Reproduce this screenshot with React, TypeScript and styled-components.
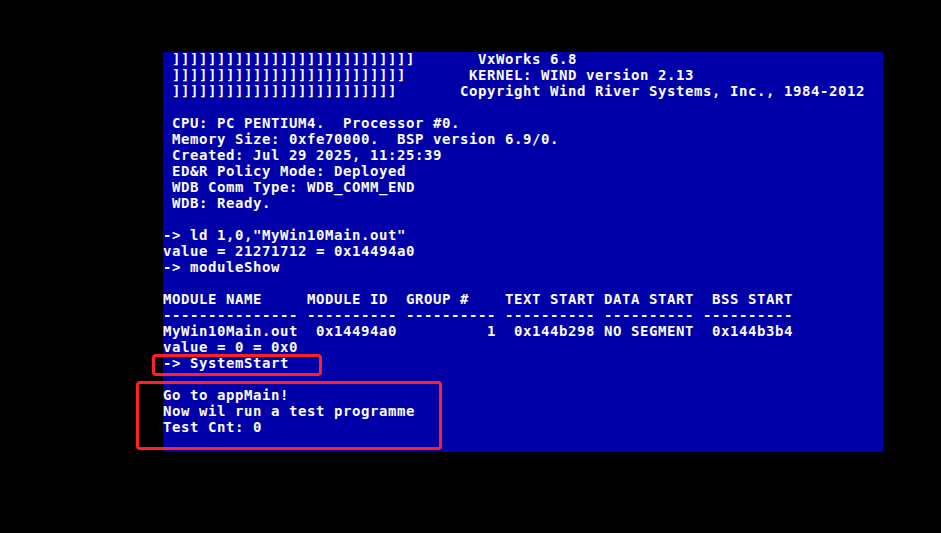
import styled, { createGlobalStyle } from "styled-components";

// 전역 스타일
const GlobalStyle = createGlobalStyle`
  html, body {
    margin: 0;
    padding: 0;
    background: #000;
  }
`;

// 검은 바탕 페이지
const Page = styled.div`
  position: relative;
  width: 941px;
  height: 533px;
  background: #000;
  padding: 52px 0 0 163px;
  box-sizing: border-box;
  overflow: hidden;
`;

// VGA 텍스트 화면 (80x25)
const Screen = styled.div`
  width: 720px;
  height: 400px;
  background: #0000a8;
  overflow: hidden;
  display: flex;
  flex-direction: column;
`;

const Line = styled.div<{ $first?: boolean }>`
  height: 16px;
  line-height: 16px;
  white-space: pre;
  color: #fcfcfc;
  font-family: "DejaVu Sans Mono", "Liberation Mono", monospace;
  font-weight: bold;
  font-size: 14px;
  letter-spacing: 0.57px;
  margin-top: ${(p) => (p.$first ? "-1px" : "0")};
`;

// 빨간 강조 박스
const Marker = styled.div<{ $left: number; $top: number; $width: number; $height: number }>`
  position: absolute;
  left: ${(p) => p.$left}px;
  top: ${(p) => p.$top}px;
  width: ${(p) => p.$width}px;
  height: ${(p) => p.$height}px;
  border: 3px solid #ff2222;
  border-radius: 4px;
  box-sizing: border-box;
`;

const rep = (c: string, n: number) => c.repeat(n);

const lines: string[] = [
  " " + rep("]", 27) + rep(" ", 7) + "VxWorks 6.8",
  " " + rep("]", 26) + rep(" ", 7) + "KERNEL: WIND version 2.13",
  " " + rep("]", 25) + rep(" ", 7) + "Copyright Wind River Systems, Inc., 1984-2012",
  "",
  " CPU: PC PENTIUM4.  Processor #0.",
  " Memory Size: 0xfe70000.  BSP version 6.9/0.",
  " Created: Jul 29 2025, 11:25:39",
  " ED&R Policy Mode: Deployed",
  " WDB Comm Type: WDB_COMM_END",
  " WDB: Ready.",
  "",
  '-> ld 1,0,"MyWin10Main.out"',
  "value = 21271712 = 0x14494a0",
  "-> moduleShow",
  "",
  "MODULE NAME     MODULE ID  GROUP #    TEXT START DATA START  BSS START",
  "--------------- ---------- ---------- ---------- ---------- ----------",
  "MyWin10Main.out  0x14494a0" + rep(" ", 10) + "1  0x144b298 NO SEGMENT  0x144b3b4",
  "value = 0 = 0x0",
  "-> SystemStart",
  "",
  "Go to appMain!",
  "Now wil run a test programme",
  "Test Cnt: 0",
  "",
];

function App() {
  return (
    <>
      <GlobalStyle />
      <Page>
        <Screen>
          {lines.map((line, index) => (
            <Line key={index} $first={index === 0}>
              {line}
            </Line>
          ))}
        </Screen>
        <Marker $left={152} $top={354} $width={170} $height={22} />
        <Marker $left={136} $top={381} $width={306} $height={69} />
      </Page>
    </>
  );
}

export default App;
